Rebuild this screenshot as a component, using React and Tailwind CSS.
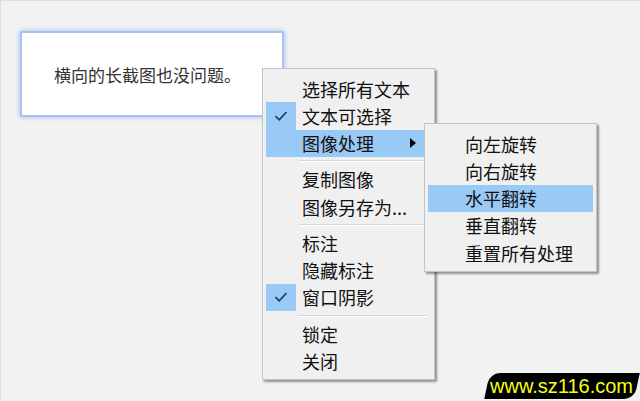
import React from 'react';

const FONT = { fontFamily: '"Noto Sans CJK SC", "Noto Sans", sans-serif' };

const Check = () => (
  <svg width="14" height="12" viewBox="0 0 14 12" fill="none">
    <path d="M1.5 6.2 L5.2 9.8 L12.5 2" stroke="#1d3a5f" strokeWidth="1.7" />
  </svg>
);

const Arrow = () => (
  <svg width="6" height="10" viewBox="0 0 6 10">
    <path d="M0 0 L6 5 L0 10 Z" fill="#000" />
  </svg>
);

const Item = ({ label, checked, active, arrow }) => (
  <div className="flex h-[27.25px] items-center">
    <div className={`flex h-full w-[30px] items-center justify-center ${checked || active ? 'bg-[#99c9f5]' : ''}`}>
      {checked && <Check />}
    </div>
    <div className={`flex h-full flex-1 items-center pl-[6px] ${active ? 'bg-[#99c9f5]' : ''}`}>
      <span className="flex-1 text-[18px] leading-none text-[#111]">{label}</span>
      {arrow && <span className="mr-[15px] flex"><Arrow /></span>}
    </div>
  </div>
);

const Sep = () => (
  <div className="flex h-[9px] items-center pl-[32px] pr-[3px]">
    <div className="h-[2px] flex-1 border-t border-b border-t-[#d6d6d6] border-b-white" />
  </div>
);

const SubItem = ({ label, active }) => (
  <div className={`flex h-[27.25px] items-center pl-[37px] ${active ? 'bg-[#99c9f5]' : ''}`}>
    <span className="text-[18px] leading-none text-[#111]">{label}</span>
  </div>
);

export default function App() {
  return (
    <div className="relative h-[401px] w-[640px] overflow-hidden border-l border-t border-[#dedede] bg-[#f2f2f2]" style={FONT}>
      <div className="pl-[19px] pt-[30px]">
        <div className="flex h-[86px] w-[264px] items-center border-2 border-[#a5c4f5] bg-white pl-[32px] shadow-[0_0_5px_rgba(90,140,230,0.55)]">
          <span className="text-[17px] leading-none text-[#333]">横向的长截图也没问题。</span>
        </div>
      </div>

      <div className="absolute left-[261px] top-[67px] w-[173px] border border-[#c4c4c4] bg-[#f0f0f0] px-[3px] pb-[4px] pt-[6px] shadow-[2px_2px_2px_rgba(0,0,0,0.4)]">
        <Item label="选择所有文本" />
        <Item label="文本可选择" checked />
        <Item label="图像处理" active arrow />
        <Sep />
        <Item label="复制图像" />
        <Item label="图像另存为..." />
        <Sep />
        <Item label="标注" />
        <Item label="隐藏标注" />
        <Item label="窗口阴影" checked />
        <Sep />
        <Item label="锁定" />
        <Item label="关闭" />
      </div>

      <div className="absolute left-[423px] top-[122px] w-[173px] border border-[#c4c4c4] bg-[#f0f0f0] px-[3px] pb-[5px] pt-[6px] shadow-[2px_2px_2px_rgba(0,0,0,0.4)]">
        <SubItem label="向左旋转" />
        <SubItem label="向右旋转" />
        <SubItem label="水平翻转" active />
        <SubItem label="垂直翻转" />
        <SubItem label="重置所有处理" />
      </div>

      <div className="absolute left-[486px] top-[372px] flex h-[26px] w-[150px] -skew-x-[12deg] items-center justify-center rounded-tl-[10px] rounded-br-[10px] bg-black">
        <span className="skew-x-[12deg] text-[20px] leading-none text-[#f5ff1a]" style={{ fontFamily: '"Liberation Sans", Arial, sans-serif' }}>www.sz116.com</span>
      </div>
    </div>
  );
}
